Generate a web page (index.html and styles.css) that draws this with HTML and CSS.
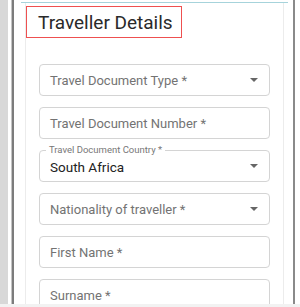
FILE: index.html
```html
<!DOCTYPE html>
<html lang="en">
<head>
  <meta charset="UTF-8">
  <meta name="viewport" content="width=device-width, initial-scale=1.0">
  <title>Traveller Details</title>
  <link rel="stylesheet" href="styles.css">
</head>
<body>

<div class="backdrop">
  <div class="side"></div>
  <div class="shell">
    <div class="topline"></div>
    <div class="card">
      <div class="title-box">
        <h2>Traveller Details</h2>
      </div>

      <form class="fields">
        <div class="field select">
          <span class="placeholder">Travel Document Type *</span>
          <span class="arrow"></span>
        </div>
        <div class="field">
          <span class="placeholder">Travel Document Number *</span>
        </div>
        <div class="field select filled">
          <span class="float-label">Travel Document Country *</span>
          <span class="value">South Africa</span>
          <span class="arrow"></span>
        </div>
        <div class="field select">
          <span class="placeholder">Nationality of traveller *</span>
          <span class="arrow"></span>
        </div>
        <div class="field">
          <span class="placeholder">First Name *</span>
        </div>
        <div class="field">
          <span class="placeholder">Surname *</span>
        </div>
      </form>
    </div>
  </div>
</div>
<div class="bottom"></div>

</body>
</html>
```

FILE: styles.css
```css
/* General Styles */
body {
  font-family: Roboto, "Liberation Sans", Arial, sans-serif;
  margin: 0;
  padding: 0;
  background: #fff;
  color: #222;
}
.backdrop {
  display: flex;
  height: 304px;
  overflow: hidden;
}
.side {
  width: 8px;
  background: #d8d8d8;
  margin-right: 4px;
}
/* Dialog shell */
.shell {
  width: 279px;
  border-left: 2px solid #7c7c7c;
  border-right: 2px solid #8a8a8a;
  box-shadow: -1px 0 0 #c4c4c4;
  padding-top: 2px;
}
.topline {
  height: 1px;
  background: #a6d3db;
  margin: 0 5px 0 7px;
}
.card {
  margin: 0 9px 0 11px;
  border-left: 1px solid #ececec;
  border-right: 1px solid #ececec;
  height: 300px;
  padding-top: 3px;
}
.title-box {
  height: 30px;
  width: 143px;
  border: 1px solid #ee5050;
  display: flex;
  align-items: center;
  padding-left: 11px;
}
.title-box h2 {
  margin: 0;
  font-size: 19px;
  font-weight: 400;
  color: #2a2a2a;
}
/* Form fields */
.fields {
  display: flex;
  flex-direction: column;
  gap: 11px;
  margin: 26px 13px 0 13px;
}
.field {
  height: 30px;
  border: 1px solid #d4d4d4;
  border-radius: 4px;
  display: flex;
  align-items: center;
  padding: 0 11px 0 10px;
  position: relative;
}
.placeholder {
  font-size: 13px;
  color: #737373;
  flex: 1;
}
.value {
  font-size: 13.5px;
  color: #222;
  flex: 1;
  padding-top: 2px;
}
.float-label {
  position: absolute;
  top: -6px;
  left: 6px;
  padding: 0 3px;
  background: #fff;
  font-size: 9.5px;
  color: #777;
  line-height: 10px;
}
.arrow {
  width: 0;
  height: 0;
  border-left: 4px solid transparent;
  border-right: 4px solid transparent;
  border-top: 4px solid #666;
}
.bottom {
  height: 3px;
  background: #f2f2f2;
}
```
